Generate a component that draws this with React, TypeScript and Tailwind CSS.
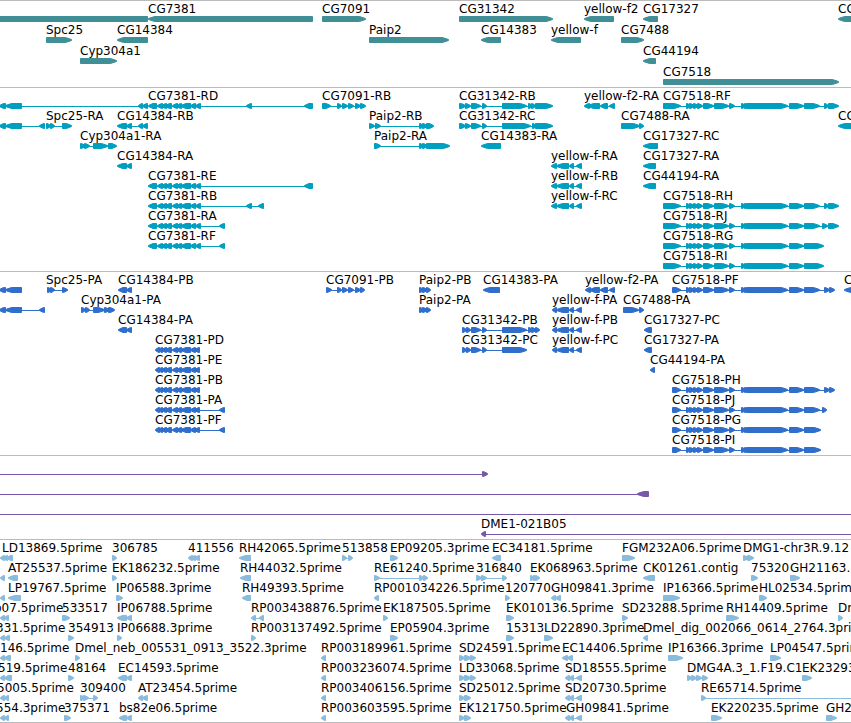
import React from "react";

type Dir = ">" | "<";

// [label, strand, block bounds as start, end, start, end ..., label x when it differs from the first block]
type Feature = [string, Dir, number[], number?];

interface TrackData {
  name: string;
  fill: string;
  rowClass: string;
  padClass: string;
  rows: Feature[][];
}

const FAR = 6000;

// Exon layouts shared by isoforms of the same gene
const cg7381 = [148, 157, 157, 163, 161, 167, 165, 172, 172, 178, 176, 182, 180, 191, 190, 196, 195, 201];
const cg7381p = [155, 160, 158, 163, 161, 167, 165, 172, 172, 178, 176, 182, 180, 191, 190, 196, 194, 200];
const cg7518mid = [
  686, 691, 689, 695, 693, 699, 697, 703, 703, 714, 714, 729, 729, 735, 741, 746, 744, 749, 746, 788, 789, 804,
];
const cg7518 = [663, 681, ...cg7518mid];
const cg7518p = [672, 681, ...cg7518mid];
const cg31342 = [459, 466, 465, 471, 471, 481, 482, 487];
const cg31342p = [462, 467, 466, 471, 471, 481, 482, 487];
const yellowF = [551, 557, 556, 569, 569, 574, 576, 582];
const yellowFp = [552, 557, 556, 569, 569, 574, 576, 582];
const leftGene = [-1, 6, 5, 22];

const tracks: TrackData[] = [
  {
    name: "Genes",
    fill: "#408f96",
    rowClass: "h-[21px]",
    padClass: "pt-px pb-px",
    rows: [
      [
        ["", "<", [-40, 148]],
        ["CG7381", "<", [148, 313]],
        ["CG7091", ">", [322, 366]],
        ["CG31342", ">", [459, 553]],
        ["yellow-f2", "<", [584, 614]],
        ["CG17327", "<", [643, 658]],
        ["CG", "<", [838, 900]],
      ],
      [
        ["Spc25", ">", [46, 72]],
        ["CG14384", "<", [117, 148]],
        ["Paip2", ">", [369, 449]],
        ["CG14383", "<", [481, 501]],
        ["yellow-f", "<", [551, 581]],
        ["CG7488", ">", [621, 644]],
      ],
      [
        ["Cyp304a1", ">", [80, 117]],
        ["CG44194", "<", [643, 656]],
      ],
      [["CG7518", ">", [663, 839]]],
    ],
  },
  {
    name: "Transcripts",
    fill: "#009ebf",
    rowClass: "h-5",
    padClass: "pt-px pb-0.5",
    rows: [
      [
        ["", "<", [...leftGene, 138, 143, 142, 148]],
        ["CG7381-RD", "<", [...cg7381, 246, 252, 304, 313]],
        ["CG7091-RB", ">", [322, 331, 337, 342, 342, 348, 348, 354, 355, 361, 360, 366]],
        ["CG31342-RB", ">", [...cg31342, 502, 527, 528, 533, 531, 536, 535, 553]],
        ["yellow-f2-RA", "<", [584, 590, 587, 600, 600, 608, 609, 615]],
        ["CG7518-RF", ">", [...cg7518, 804, 820, 824, 829, 828, 839]],
      ],
      [
        ["", "<", [...leftGene, 39, 45]],
        ["Spc25-RA", ">", [46, 51, 50, 55, 62, 72]],
        ["CG14384-RB", "<", [117, 127, 126, 132, 138, 143, 142, 148]],
        ["Paip2-RB", ">", [369, 375, 375, 381, 419, 424, 422, 428, 426, 434]],
        ["CG31342-RC", ">", [...cg31342, 502, 531, 532, 537, 535, 553]],
        ["CG7488-RA", ">", [621, 640, 639, 644]],
        ["CG", "<", [838, 900]],
      ],
      [
        ["Cyp304a1-RA", ">", [80, 86, 84, 90, 93, 108, 108, 117]],
        ["Paip2-RA", ">", [374, 381, 419, 424, 422, 428, 426, 450]],
        ["CG14383-RA", "<", [481, 501]],
        ["CG17327-RC", "<", [643, 658]],
      ],
      [
        ["CG14384-RA", "<", [117, 127, 126, 132]],
        ["yellow-f-RA", "<", yellowF],
        ["CG17327-RA", "<", [643, 656]],
      ],
      [
        ["CG7381-RE", "<", [...cg7381, 304, 313]],
        ["yellow-f-RB", "<", yellowF],
        ["CG44194-RA", "<", [643, 656]],
      ],
      [
        ["CG7381-RB", "<", [...cg7381, 246, 252, 258, 264]],
        ["yellow-f-RC", "<", yellowF],
        ["CG7518-RH", ">", [...cg7518, 804, 820, 824, 829, 828, 839]],
      ],
      [
        ["CG7381-RA", "<", [...cg7381, 219, 225]],
        ["CG7518-RJ", ">", [...cg7518, 804, 820, 822, 828, 828, 839]],
      ],
      [
        ["CG7381-RF", "<", [...cg7381, 219, 225]],
        ["CG7518-RG", ">", [...cg7518, 804, 824]],
      ],
      [["CG7518-RI", ">", [...cg7518, 804, 824]]],
    ],
  },
  {
    name: "Proteins",
    fill: "#306ecc",
    rowClass: "h-5",
    padClass: "pt-px pb-0.5",
    rows: [
      [
        ["", "<", leftGene],
        ["Spc25-PA", ">", [47, 52, 50, 55, 62, 68], 46],
        ["CG14384-PB", "<", [118, 127, 126, 132]],
        ["CG7091-PB", ">", [326, 332, 337, 342, 342, 348, 348, 354, 355, 361, 360, 365]],
        ["Paip2-PB", ">", [419, 424, 422, 428, 426, 431]],
        ["CG14383-PA", "<", [483, 500]],
        ["yellow-f2-PA", "<", [585, 591, 589, 600, 600, 608, 609, 615]],
        ["CG7518-PF", ">", [...cg7518p, 804, 820, 824, 830, 829, 835]],
        ["CG", "<", [844, 900]],
      ],
      [
        ["", "<", [...leftGene, 39, 45]],
        ["Cyp304a1-PA", ">", [81, 86, 85, 90, 93, 105, 104, 110, 108, 115]],
        ["Paip2-PA", ">", [419, 424, 422, 428, 426, 431]],
        ["yellow-f-PA", "<", yellowFp],
        ["CG7488-PA", ">", [623, 639, 639, 644]],
      ],
      [
        ["CG14384-PA", "<", [118, 127, 126, 132]],
        ["CG31342-PB", ">", [...cg31342p, 502, 527, 528, 533, 531, 537, 535, 540]],
        ["yellow-f-PB", "<", yellowFp],
        ["CG17327-PC", "<", [644, 652]],
      ],
      [
        ["CG7381-PD", "<", cg7381p],
        ["CG31342-PC", ">", [...cg31342p, 502, 527]],
        ["yellow-f-PC", "<", yellowFp],
        ["CG17327-PA", "<", [644, 652]],
      ],
      [
        ["CG7381-PE", "<", cg7381p],
        ["CG44194-PA", "<", [650, 655]],
      ],
      [
        ["CG7381-PB", "<", cg7381p],
        ["CG7518-PH", ">", [...cg7518p, 804, 820, 824, 830, 829, 835]],
      ],
      [
        ["CG7381-PA", "<", [...cg7381p, 219, 225]],
        ["CG7518-PJ", ">", [...cg7518p, 804, 820, 822, 827]],
      ],
      [
        ["CG7381-PF", "<", [...cg7381p, 219, 225]],
        ["CG7518-PG", ">", [...cg7518p, 804, 821]],
      ],
      [["CG7518-PI", ">", [...cg7518p, 804, 821]]],
    ],
  },
  {
    name: "Clones",
    fill: "#7758a8",
    rowClass: "h-5",
    padClass: "pt-px pb-0.5",
    rows: [
      [["", ">", [-20, -10, 482, 488]]],
      [["", "<", [-20, -10, 637, 649]]],
      [["", "<", [-20, -10, FAR, FAR + 5]]],
      [["DME1-021B05", "<", [481, 486, FAR, FAR + 5]]],
    ],
  },
  {
    name: "ESTs",
    fill: "#88bbdd",
    rowClass: "h-5",
    padClass: "pt-px pb-px",
    rows: [
      [
        ["LD13869.5prime", "<", [0, 5, 3, 8, 6, 13], 2],
        ["306785", ">", [112, 117]],
        ["411556", "<", [188, 193, 191, 196, 194, 200]],
        ["RH42065.5prime", "<", [239, 251]],
        ["513858", ">", [342, 347, 348, 353]],
        ["EP09205.3prime", ">", [390, 398]],
        ["EC34181.5prime", "<", [492, 501]],
        ["FGM232A06.5prime", ">", [622, 635]],
        ["DMG1-chr3R.9.12", ">", [743, 749, 747, 754]],
      ],
      [
        ["", "<", [0, 5]],
        ["AT25537.5prime", "<", [8, 18]],
        ["EK186232.5prime", ">", [112, 117]],
        ["RH44032.5prime", "<", [240, 251]],
        ["RE61240.5prime", ">", [374, 380, 419, 424, 423, 428]],
        ["316840", ">", [476, 482, 481, 487, 502, 507]],
        ["EK068963.5prime", ">", [530, 535, 533, 538, 535, 540]],
        ["CK01261.contig", "<", [643, 655]],
        ["75320", ">", [751, 758]],
        ["GH21163.5prime", ">", [790, 800]],
      ],
      [
        ["", "<", [0, 5]],
        ["LP19767.5prime", "<", [8, 21]],
        ["IP06588.3prime", ">", [116, 123]],
        ["RH49393.5prime", "<", [242, 251]],
        ["RP001034226.5prime", "<", [374, 379]],
        ["120770", ">", [505, 510]],
        ["GH09841.3prime", "<", [551, 556, 555, 561]],
        ["IP16366.5prime", ">", [663, 680]],
        ["HL02534.5prime", ">", [759, 767]],
      ],
      [
        ["b07.5prime", "<", [0, 5, 4, 9], -6],
        ["533517", ">", [62, 70]],
        ["IP06788.5prime", "<", [117, 127, 126, 132]],
        ["RP003438876.5prime", "<", [251, 256, 259, 264]],
        ["EK187505.5prime", ">", [383, 388]],
        ["EK010136.5prime", ">", [506, 514]],
        ["SD23288.5prime", ">", [622, 628]],
        ["RH14409.5prime", ">", [726, 739]],
        ["Dmel", ">", [838, 843]],
      ],
      [
        ["331.5prime", "<", [0, 5, 4, 10], -4],
        ["354913", ">", [68, 74]],
        ["IP06688.3prime", ">", [117, 122]],
        ["RP003137492.5prime", ">", [251, 256]],
        ["EP05904.3prime", ">", [390, 398]],
        ["15313", ">", [506, 514]],
        ["LD22890.3prime", ">", [544, 553]],
        ["Dmel_dig_002066_0614_2764.3prime", "<", [643, 648]],
      ],
      [
        ["146.5prime", "<", [0, 5, 4, 11], 0],
        ["Dmel_neb_005531_0913_3522.3prime", ">", [75, 80]],
        ["RP003189961.5prime", "<", [321, 326]],
        ["SD24591.5prime", ">", [459, 465, 464, 471, 470, 476]],
        ["EC14406.5prime", "<", [562, 568, 567, 573]],
        ["IP16366.3prime", ">", [668, 683]],
        ["LP04547.5prime", ">", [770, 781]],
      ],
      [
        ["519.5prime", "<", [0, 5, 4, 12], -2],
        ["48164", ">", [68, 74]],
        ["EC14593.5prime", "<", [118, 127, 126, 132]],
        ["RP003236074.5prime", "<", [321, 326]],
        ["LD33068.5prime", ">", [459, 465, 464, 471, 470, 476]],
        ["SD18555.5prime", "<", [565, 570, 569, 574, 576, 582]],
        ["DMG4A.3_1.F19.C1", ">", [687, 692, 691, 697, 696, 702, 702, 708]],
        ["EK23293.5prime", ">", [802, 812]],
      ],
      [
        ["5005.5prime", "<", [0, 5, 4, 9], -3],
        ["309400", ">", [80, 85, 83, 89, 93, 98]],
        ["AT23454.5prime", "<", [138, 143, 142, 148]],
        ["RP003406156.5prime", "<", [321, 326]],
        ["SD25012.5prime", ">", [459, 465, 464, 471]],
        ["SD20730.5prime", "<", [565, 570, 569, 574, 576, 582]],
        ["RE65714.5prime", ">", [701, 706, FAR, FAR + 5]],
      ],
      [
        ["554.3prime", "<", [0, 5, 4, 9], -4],
        ["375371", ">", [64, 71]],
        ["bs82e06.5prime", "<", [119, 127, 126, 132]],
        ["RP003603595.5prime", "<", [321, 326]],
        ["EK121750.5prime", ">", [459, 465, 464, 471]],
        ["GH09841.5prime", "<", [565, 570, 569, 574, 576, 582], 566],
        ["EK220235.5prime", ">", [711, 722]],
        ["GH2", ">", [826, 837]],
      ],
    ],
  },
];

// Outline is stroked one pixel wide, so the corners sit half a pixel inside the block
function arrowPoints(start: number, end: number, dir: Dir) {
  const s = start + 0.5;
  const e = end - 0.5;
  const width = end - start;
  const head = Math.min(width - 2, Math.max(4, Math.min(width / 2, 6)));
  return dir === ">"
    ? `${s},0.5 ${e - head},0.5 ${e},2.5 ${e},3.5 ${e - head},5.5 ${s},5.5`
    : `${e},0.5 ${s + head},0.5 ${s},2.5 ${s},3.5 ${s + head},5.5 ${e},5.5`;
}

function Glyph({ feature }: { feature: Feature }) {
  const [, dir, bounds] = feature;
  const blocks: [number, number][] = [];
  for (let i = 0; i < bounds.length; i += 2) blocks.push([bounds[i], bounds[i + 1]]);
  const first = blocks[0][0];
  const last = blocks[blocks.length - 1][1];
  return (
    <g>
      {blocks.length > 1 && <rect x={first + 1} y={3} width={last - first - 2} height={1} stroke="none" />}
      {blocks.map(([s, e], i) => (
        <polygon key={i} points={arrowPoints(s, e, dir)} />
      ))}
    </g>
  );
}

function Row({ features, fill, className }: { features: Feature[]; fill: string; className: string }) {
  return (
    <div className={`flex flex-col ${className}`}>
      <div className="relative h-3.5">
        {features.map(([label, , bounds, labelX], i) =>
          label ? (
            <span key={i} className="absolute top-0 whitespace-nowrap" style={{ left: labelX ?? bounds[0] }}>
              {label}
            </span>
          ) : null,
        )}
      </div>
      <svg className="block h-1.5 w-full" fill={fill} stroke={fill} strokeWidth={1} strokeLinejoin="round" aria-hidden="true">
        {features.map((f, i) => (
          <Glyph key={i} feature={f} />
        ))}
      </svg>
    </div>
  );
}

export default function App() {
  return (
    <main className="w-full overflow-hidden border-b border-[#bbbbbb] bg-white font-['DejaVu_Sans',sans-serif] text-[12px] leading-[14px] text-black">
      {tracks.map((t) => (
        <section key={t.name} aria-label={t.name} className={`border-t border-[#bbbbbb] ${t.padClass}`}>
          {t.rows.map((row, i) => (
            <Row key={i} features={row} fill={t.fill} className={t.rowClass} />
          ))}
        </section>
      ))}
    </main>
  );
}
